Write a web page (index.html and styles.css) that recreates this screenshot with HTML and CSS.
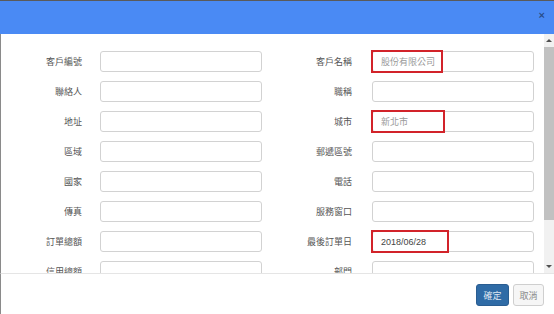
FILE: index.html
```html
<!DOCTYPE html>
<html lang="zh-Hant">
<head>
  <meta charset="UTF-8">
  <meta name="viewport" content="width=device-width, initial-scale=1.0">
  <title>客戶資料</title>
  <link rel="stylesheet" href="styles.css">
</head>
<body>
  <div class="modal">
    <div class="modal-header">
      <span class="close">&times;</span>
    </div>

    <div class="modal-main">
      <div class="modal-body">
        <form class="form-grid">
          <label>客戶編號</label>
          <div class="field"><input type="text"></div>
          <label>客戶名稱</label>
          <div class="field"><input type="text" placeholder="股份有限公司"><span class="mark mark-name"></span></div>

          <label>聯絡人</label>
          <div class="field"><input type="text"></div>
          <label>職稱</label>
          <div class="field"><input type="text"></div>

          <label>地址</label>
          <div class="field"><input type="text"></div>
          <label>城市</label>
          <div class="field"><input type="text" placeholder="新北市"><span class="mark mark-city"></span></div>

          <label>區域</label>
          <div class="field"><input type="text"></div>
          <label>郵遞區號</label>
          <div class="field"><input type="text"></div>

          <label>國家</label>
          <div class="field"><input type="text"></div>
          <label>電話</label>
          <div class="field"><input type="text"></div>

          <label>傳真</label>
          <div class="field"><input type="text"></div>
          <label>服務窗口</label>
          <div class="field"><input type="text"></div>

          <label>訂單總額</label>
          <div class="field"><input type="text"></div>
          <label>最後訂單日</label>
          <div class="field"><input type="text" class="date" value="2018/06/28"><span class="mark mark-date"></span></div>

          <label>信用總額</label>
          <div class="field"><input type="text"></div>
          <label>部門</label>
          <div class="field"><input type="text"></div>
        </form>
      </div>

      <!-- 捲軸 -->
      <div class="scrollbar">
        <div class="arrow arrow-up"></div>
        <div class="thumb"></div>
        <div class="track"></div>
        <div class="arrow arrow-down"></div>
      </div>
    </div>

    <div class="modal-footer">
      <button class="btn btn-primary">確定</button>
      <button class="btn btn-default">取消</button>
    </div>
  </div>
</body>
</html>
```

FILE: styles.css
```css
body {
  margin: 0;
  font-family: "Noto Sans CJK TC", "Liberation Sans", sans-serif;
  background-color: white;
}
.modal {
  width: 554px;
  height: 314px;
  border-top: 1px solid #5a5a5a;
  box-sizing: border-box;
  display: flex;
  flex-direction: column;
  overflow: hidden;
}
.modal-header {
  height: 33px;
  background-color: #4a8af4;
  display: flex;
  justify-content: flex-end;
  align-items: center;
  padding-right: 9px;
  padding-bottom: 4px;
  box-sizing: border-box;
  flex-shrink: 0;
}
.close {
  color: rgba(0, 0, 0, 0.45);
  font-family: "Liberation Sans", sans-serif;
  font-size: 11px;
  font-weight: bold;
  line-height: 1;
}
.modal-main {
  height: 239px;
  display: flex;
  border-left: 1px solid #8a8a8a;
  flex-shrink: 0;
}
.modal-body {
  flex: 1;
  overflow: hidden;
}
.form-grid {
  margin: 0;
  padding-top: 17px;
  display: grid;
  grid-template-columns: 99px 162px 110px 162px;
  grid-auto-rows: 21px;
  row-gap: 9px;
  align-items: center;
}
.form-grid label {
  text-align: right;
  font-size: 9px;
  color: #555;
  padding-right: 18px;
  line-height: 21px;
}
.form-grid label:nth-child(4n+3) {
  padding-right: 20px;
}
.field {
  position: relative;
  height: 21px;
}
.field input {
  display: block;
  margin: 0;
  width: 100%;
  height: 21px;
  box-sizing: border-box;
  border: 1px solid #d2d2d2;
  border-radius: 3px;
  padding: 0 8px;
  font-family: "Noto Sans CJK TC", "Liberation Sans", sans-serif;
  font-size: 9px;
  color: #555;
  outline: none;
}
.field input::placeholder {
  color: #9a9a9a;
}
.field input.date {
  font-family: "Liberation Sans", sans-serif;
  color: #444;
}
.mark {
  position: absolute;
  left: -1px;
  top: -1px;
  height: 23px;
  border: 2px solid #d2232a;
  box-sizing: border-box;
}
.mark-name {
  width: 72px;
}
.mark-city {
  width: 74px;
}
.mark-date {
  width: 78px;
}
.scrollbar {
  width: 10px;
  display: flex;
  flex-direction: column;
  background-color: #f1f1f1;
}
.arrow {
  height: 13px;
  display: flex;
  justify-content: center;
  align-items: center;
}
.arrow::after {
  content: "";
  border-left: 3px solid transparent;
  border-right: 3px solid transparent;
}
.arrow-up::after {
  border-bottom: 3px solid #505050;
}
.arrow-down::after {
  border-top: 3px solid #505050;
}
.thumb {
  height: 173px;
  background-color: #c1c1c1;
}
.track {
  flex: 1;
}
.modal-footer {
  border-top: 1px solid #e5e5e5;
  border-left: 1px solid #8a8a8a;
  flex: 1;
  display: flex;
  justify-content: flex-end;
  align-items: flex-start;
  gap: 4px;
  padding: 10px 10px 0 0;
}
.btn {
  height: 22px;
  padding: 0;
  white-space: nowrap;
  font-family: "Noto Sans CJK TC", sans-serif;
  font-size: 9px;
  border-radius: 3px;
  cursor: pointer;
}
.btn-primary {
  width: 33px;
  background-color: #2f6ba6;
  border: 1px solid #2a5d91;
  color: #dfe8f2;
}
.btn-default {
  width: 31px;
  background-color: #f6f6f6;
  border: 1px solid #cfcfcf;
  color: #8a8a8a;
}
```
